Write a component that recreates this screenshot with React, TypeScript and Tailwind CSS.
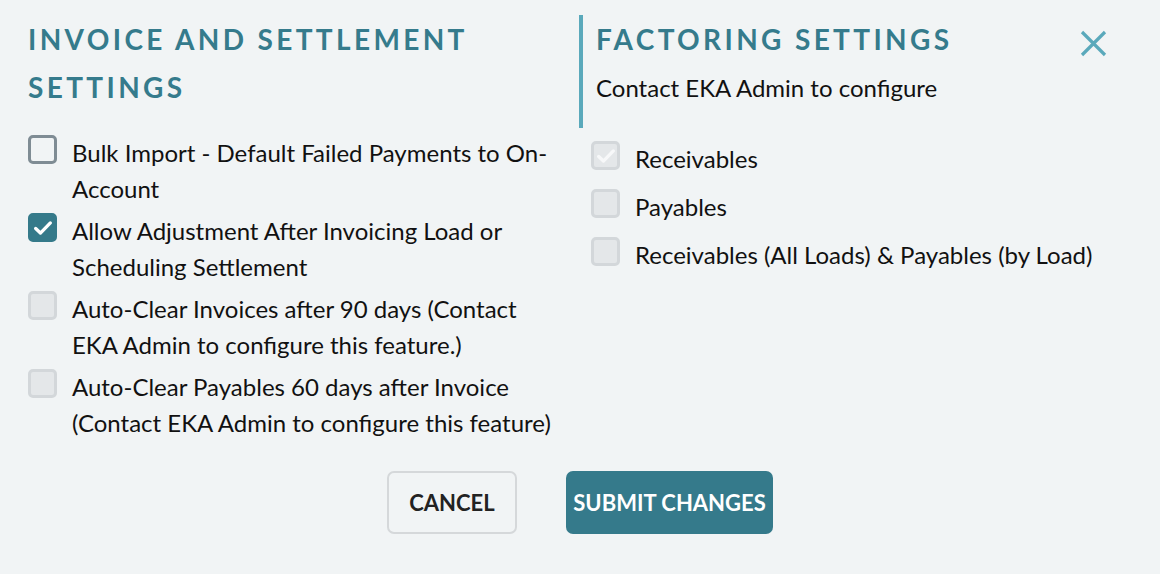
import React from 'react';

type Option = {
  label: string;
  checked?: boolean;
  disabled?: boolean;
};

const invoiceOptions: Option[] = [
  { label: 'Bulk Import - Default Failed Payments to On-Account' },
  { label: 'Allow Adjustment After Invoicing Load or Scheduling Settlement', checked: true },
  { label: 'Auto-Clear Invoices after 90 days (Contact EKA Admin to configure this feature.)', disabled: true },
  { label: 'Auto-Clear Payables 60 days after Invoice (Contact EKA Admin to configure this feature)', disabled: true },
];

const factoringOptions: Option[] = [
  { label: 'Receivables', checked: true, disabled: true },
  { label: 'Payables', disabled: true },
  { label: 'Receivables (All Loads) & Payables (by Load)', disabled: true },
];

function Checkbox({ checked, disabled }: { checked?: boolean; disabled?: boolean }) {
  // disabled boxes are flat grey, enabled ones get the teal fill when ticked
  let boxClass = 'border-[3px] border-[#7f8c94] bg-transparent';
  if (disabled) boxClass = 'border-[3px] border-[#d3d7da] bg-[#e4e7e9]';
  else if (checked) boxClass = 'border-[3px] border-[#357a8a] bg-[#357a8a]';

  return (
    <span className={`flex h-[29px] w-[29px] shrink-0 items-center justify-center rounded-[5px] ${boxClass}`}>
      {checked && (
        <svg className="h-[22px] w-[22px]" viewBox="0 0 24 24" fill="none" stroke={disabled ? '#f7f8f9' : '#ffffff'} strokeWidth={3.6} strokeLinecap="round" strokeLinejoin="round">
          <path d="M4 12.5l5.2 5L20 6.5" />
        </svg>
      )}
    </span>
  );
}

function OptionRow({ option }: { option: Option }) {
  return (
    <label className="flex items-start gap-[15px]">
      <Checkbox checked={option.checked} disabled={option.disabled} />
      <span className="text-[24px] leading-[36px] text-[#111111]">{option.label}</span>
    </label>
  );
}

export default function App() {
  return (
    <div className="min-h-screen bg-[#f1f4f5] font-['Lato','Noto_Sans',sans-serif]">
      <div className="flex pt-[15px]">
        {/* Invoice and settlement */}
        <div className="w-[579px] shrink-0 pl-[28px] pr-[20px]">
          <h2 className="text-[28px] font-bold leading-[48px] tracking-[0.12em] text-[#357b8c]">
            INVOICE AND SETTLEMENT SETTINGS
          </h2>
          <div className="mt-[24px] flex flex-col gap-[6px]">
            {invoiceOptions.map((option) => (
              <OptionRow key={option.label} option={option} />
            ))}
          </div>
        </div>

        {/* Factoring */}
        <div className="flex-1">
          <div className="flex items-start justify-between border-l-[4px] border-[#5aa9bb] pb-[22px] pl-[13px] pr-[53px]">
            <div>
              <h2 className="text-[28px] font-bold leading-[48px] tracking-[0.12em] text-[#357b8c]">
                FACTORING SETTINGS
              </h2>
              <p className="mt-[7px] text-[24px] leading-[36px] text-[#111111]">Contact EKA Admin to configure</p>
            </div>
            <button className="mt-[15px] text-[#5aa9bb]" title="Close">
              <svg className="h-[27px] w-[27px]" viewBox="0 0 27 27" fill="none" stroke="currentColor" strokeWidth={3.2}>
                <path d="M2 2l23 23M25 2L2 25" />
              </svg>
            </button>
          </div>
          <div className="mt-[13px] flex flex-col gap-[12px] pl-[12px]">
            {factoringOptions.map((option) => (
              <OptionRow key={option.label} option={option} />
            ))}
          </div>
        </div>
      </div>

      {/* Actions */}
      <div className="mt-[30px] flex justify-center gap-[49px]">
        <button className="h-[63px] w-[130px] rounded-[7px] border-2 border-[#d5d8da] text-[22px] font-bold text-[#222222]">
          CANCEL
        </button>
        <button className="h-[63px] w-[207px] rounded-[7px] bg-[#357a8b] text-[22px] font-bold text-white">
          SUBMIT CHANGES
        </button>
      </div>
    </div>
  );
}
